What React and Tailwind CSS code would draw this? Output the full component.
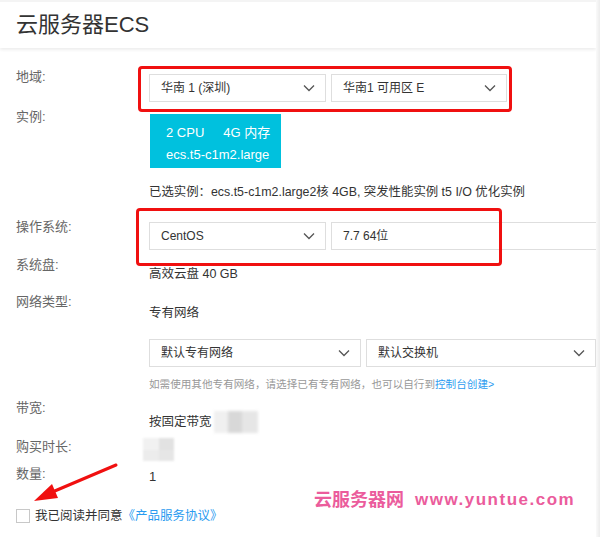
import React from "react";

const FONT = { fontFamily: '"Liberation Sans", "Noto Sans CJK SC", sans-serif' };

function Chevron() {
  return (
    <svg width="12" height="8" viewBox="0 0 12 8" className="shrink-0">
      <path d="M1 1.5 L6 6.5 L11 1.5" fill="none" stroke="#555" strokeWidth="1.3" />
    </svg>
  );
}

function Select({ w, text, chevron = true }) {
  return (
    <div
      className={`${w} h-[28px] shrink-0 border border-[#dedede] bg-white flex items-center justify-between pl-[11px] pr-[10px] text-[12px] text-[#333]`}
    >
      <span>{text}</span>
      {chevron && <Chevron />}
    </div>
  );
}

function Label({ children }) {
  return <div className="w-[133px] shrink-0 text-[13px] leading-[18px] text-[#666]">{children}</div>;
}

export default function App() {
  return (
    <div className="relative w-[600px] h-[537px] overflow-hidden bg-white flex" style={FONT}>
      <div className="flex-1 min-w-0 overflow-hidden flex flex-col">
        {/* header */}
        <div className="h-[48px] shrink-0 border-t-2 border-[#f4f4f4] flex items-center pl-4 shadow-[0_2px_3px_rgba(0,0,0,0.07)]">
          <span className="text-[22px] text-[#333] leading-none">云服务器ECS</span>
        </div>

        <div className="relative flex flex-col pt-[20px]">
          {/* 地域 */}
          <div className="flex h-[40px] pl-4">
            <Label>地域:</Label>
            <div className="flex gap-[5px] mt-[6px]">
              <Select w="w-[177px]" text="华南 1 (深圳)" />
              <Select w="w-[176px]" text="华南1 可用区 E" />
            </div>
          </div>

          {/* 实例 */}
          <div className="flex h-[110px] pl-4">
            <Label>实例:</Label>
            <div className="flex flex-col mt-[6px]">
              <div className="w-[131px] h-[54px] ml-px bg-[#00c1de] text-white text-[13px] flex flex-col pl-[16px] pt-[10px] leading-[18px]">
                <div className="flex">
                  <span>2 CPU</span>
                  <span className="ml-[19px]">4G 内存</span>
                </div>
                <div className="mt-[4px]">ecs.t5-c1m2.large</div>
              </div>
              <div className="mt-[15px] text-[12.4px] leading-[18px] text-[#333] whitespace-nowrap">
                已选实例：ecs.t5-c1m2.large2核 4GB, 突发性能实例 t5 I/O 优化实例
              </div>
            </div>
          </div>

          {/* 操作系统 */}
          <div className="flex h-[38px] pl-4">
            <Label>操作系统:</Label>
            <div className="flex gap-[5px] mt-[4px]">
              <Select w="w-[177px]" text="CentOS" />
              <Select w="w-[280px]" text="7.7 64位" chevron={false} />
            </div>
          </div>

          {/* 系统盘 */}
          <div className="flex h-[37px] pl-4">
            <Label>系统盘:</Label>
            <div className="mt-[9px] text-[12.5px] leading-[18px] text-[#333]">高效云盘 40 GB</div>
          </div>

          {/* 网络类型 */}
          <div className="flex h-[106px] pl-4">
            <Label>网络类型:</Label>
            <div className="flex flex-col mt-[11px]">
              <div className="text-[12.5px] leading-[18px] text-[#333]">专有网络</div>
              <div className="flex gap-[5px] mt-[17px]">
                <Select w="w-[212px]" text="默认专有网络" />
                <Select w="w-[230px]" text="默认交换机" />
              </div>
              <div className="mt-[9px] text-[10.6px] leading-[16px] text-[#999] whitespace-nowrap">
                如需使用其他专有网络，请选择已有专有网络，也可以自行到
                <span className="text-[#2a9bf0]">控制台创建&gt;</span>
              </div>
            </div>
          </div>

          {/* 带宽 */}
          <div className="flex h-[39px] pl-4">
            <Label>带宽:</Label>
            <div className="flex items-center mt-[6px]">
              <span className="text-[12.5px] leading-[18px] text-[#333]">按固定带宽</span>
              <div className="ml-[2px] w-[44px] h-[22px] flex blur-[1.5px]">
                <div className="w-[14px] h-full bg-[#f0f0f0]"></div>
                <div className="w-[14px] h-full bg-[#d8d8d8]"></div>
                <div className="w-[16px] h-full bg-[#e6e6e6]"></div>
              </div>
            </div>
          </div>

          {/* 购买时长 */}
          <div className="flex h-[27px] pl-4">
            <Label>购买时长:</Label>
            <div className="-ml-[6px] w-[31px] h-[23px] grid grid-cols-2 grid-rows-2 blur-[1px]">
              <div className="bg-[#f1f1f1]"></div>
              <div className="bg-[#e2e2e2]"></div>
              <div className="bg-[#ececec]"></div>
              <div className="bg-[#e6e6e6]"></div>
            </div>
          </div>

          {/* 数量 */}
          <div className="flex h-[42px] pl-4">
            <Label>数量:</Label>
            <div className="mt-[3px] text-[13px] leading-[18px] text-[#333]">1</div>
          </div>

          {/* agreement */}
          <div className="flex items-center pl-4">
            <div className="w-[14px] h-[14px] border border-[#c8c8c8] bg-white"></div>
            <span className="ml-[5px] text-[12.5px] leading-[18px] text-[#333]">我已阅读并同意</span>
            <span className="text-[12.5px] leading-[18px] text-[#2a9bf0]">《产品服务协议》</span>
          </div>

          {/* red annotation boxes */}
          <div className="absolute left-[138px] top-[18px] w-[374px] h-[46px] border-[3px] border-[#f01010] rounded-[4px]"></div>
          <div className="absolute left-[136px] top-[160px] w-[366px] h-[58px] border-[3px] border-[#f01010] rounded-[4px]"></div>
        </div>
      </div>

      {/* right edge shade */}
      <div className="w-[4px] shrink-0 bg-gradient-to-r from-[#fafafa] to-[#ececec]"></div>

      {/* red arrow */}
      <svg className="absolute left-0 top-0" width="600" height="537" viewBox="0 0 600 537">
        <path d="M116 465 L50 493" stroke="#f01010" strokeWidth="3" strokeLinecap="round" />
        <path d="M34 501 L52 484 L58 498 Z" fill="#f01010" />
      </svg>

      {/* watermark */}
      <div
        className="absolute left-[314px] top-[489px] flex items-center text-[#eb5c9c] font-bold leading-[22px] whitespace-nowrap"
        style={FONT}
      >
        <span className="text-[18px]">云服务器网</span>
        <span className="ml-[11px] tracking-[1.5px] text-[17px]">www.yuntue.com</span>
      </div>
    </div>
  );
}
